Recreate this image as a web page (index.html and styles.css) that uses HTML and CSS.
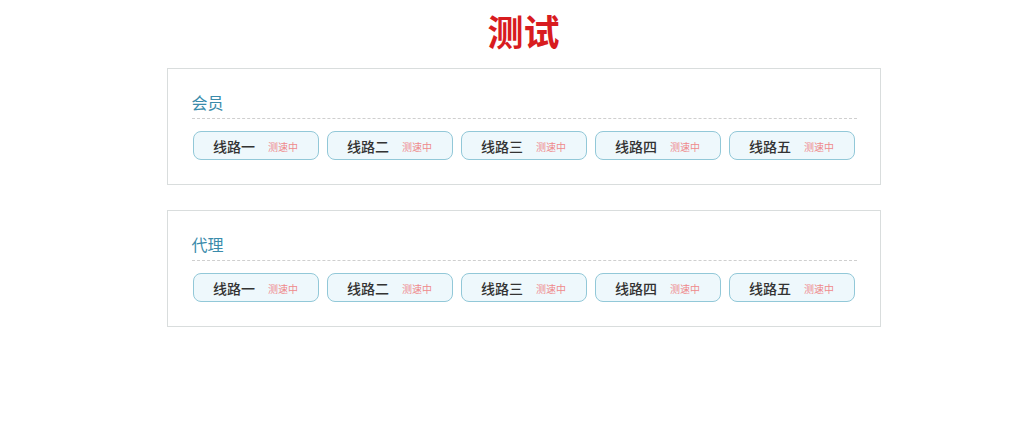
FILE: index.html
```html
<!DOCTYPE html>
<html lang="zh-CN">
<head>
  <meta charset="UTF-8" />
  <meta name="viewport" content="width=device-width, initial-scale=1.0"/>
  <title>测试</title>
  <link rel="stylesheet" href="styles.css">
</head>
<body>

  <div class="page">
    <h1 class="title">测试</h1>

    <div class="group">
      <h3 class="group-title">会员</h3>
      <div class="lines">
        <div class="line-btn"><span class="line-name">线路一</span><span class="line-speed">测速中</span></div>
        <div class="line-btn"><span class="line-name">线路二</span><span class="line-speed">测速中</span></div>
        <div class="line-btn"><span class="line-name">线路三</span><span class="line-speed">测速中</span></div>
        <div class="line-btn"><span class="line-name">线路四</span><span class="line-speed">测速中</span></div>
        <div class="line-btn"><span class="line-name">线路五</span><span class="line-speed">测速中</span></div>
      </div>
    </div>

    <div class="group">
      <h3 class="group-title">代理</h3>
      <div class="lines">
        <div class="line-btn"><span class="line-name">线路一</span><span class="line-speed">测速中</span></div>
        <div class="line-btn"><span class="line-name">线路二</span><span class="line-speed">测速中</span></div>
        <div class="line-btn"><span class="line-name">线路三</span><span class="line-speed">测速中</span></div>
        <div class="line-btn"><span class="line-name">线路四</span><span class="line-speed">测速中</span></div>
        <div class="line-btn"><span class="line-name">线路五</span><span class="line-speed">测速中</span></div>
      </div>
    </div>
  </div>

</body>
</html>
```

FILE: styles.css
```css
body {
  margin: 0;
  font-family: "Noto Sans CJK SC", "Noto Sans", sans-serif;
  background-color: #fff;
  color: #333;
}

.page {
  padding: 5px 0 0 23px;
}

.title {
  margin: 0;
  font-size: 36px;
  line-height: 50px;
  font-weight: bold;
  color: #d81c1f;
  text-align: center;
}

.group {
  width: 665px;
  margin: 13px auto 0;
  padding: 21px 23px 24px 24px;
  border: 1px solid #d9dddd;
}

.group + .group {
  margin-top: 25px;
}

.group-title {
  margin: 0;
  padding-bottom: 4px;
  font-size: 16px;
  line-height: 24px;
  font-weight: normal;
  color: #3a8bab;
  border-bottom: 1px dashed #cfcfcf;
}

.lines {
  display: flex;
  gap: 8px;
  margin-top: 12px;
  padding-left: 1px;
}

.line-btn {
  width: 124px;
  height: 26px;
  display: flex;
  align-items: center;
  justify-content: center;
  gap: 13px;
  padding-top: 1px;
  background-color: #eef8fc;
  border: 1px solid #92c8d8;
  border-radius: 8px;
}

.line-name {
  font-size: 14px;
  font-weight: 500;
  color: #333;
}

.line-speed {
  font-size: 10px;
  color: #ee8a8c;
}
```
